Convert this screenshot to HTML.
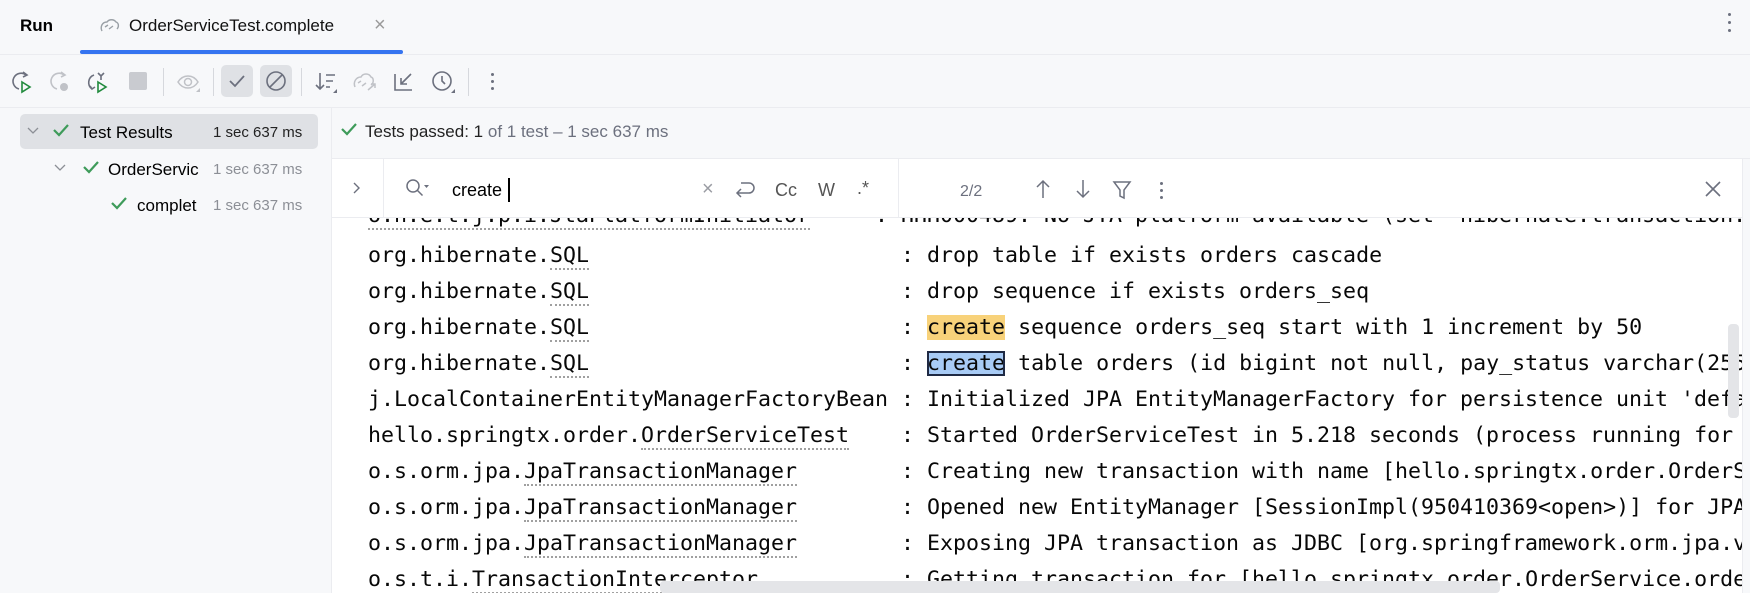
<!DOCTYPE html>
<html><head><meta charset="utf-8"><style>
*{margin:0;padding:0;box-sizing:border-box}
body{width:1750px;height:593px;overflow:hidden;background:#f7f8fa;font-family:"Liberation Sans",sans-serif;color:#000;position:relative}
.a{position:absolute}
.ui{font-size:17px;white-space:nowrap}
.mono{font-family:"DejaVu Sans Mono","Liberation Mono",monospace;font-size:21.6px;letter-spacing:0px;white-space:pre;color:#080808}
.line{position:absolute;left:368px;height:36px;line-height:36px}
.u{border-bottom:2px dotted #a0a0a0}
.sep{position:absolute;top:68px;width:1px;height:28px;background:#d6d8dd}
svg{position:absolute;overflow:visible}
</style></head><body>
<div class="a ui" style="left:20px;top:16px;font-weight:bold;font-size:17px">Run</div>
<svg style="left:99px;top:17px" width="22" height="18" viewBox="0 0 22 18"><path d="M3 14 C1 10 3 5 8 5 C10 2 15 2 17 5 C20 6 20 10 18 12 M6 10 l3 -2 M10 12 l4 -3" stroke="#9aa0a6" stroke-width="1.4" fill="none"/></svg>
<div class="a ui" style="left:129px;top:16px;color:#111">OrderServiceTest.complete</div>
<div class="a ui" style="left:374px;top:14px;color:#9a9a9a;font-size:20px">×</div>
<div class="a" style="left:80px;top:50px;width:323px;height:4px;background:#3574f0;border-radius:2px"></div>
<div class="a" style="left:0;top:54px;width:1750px;height:1px;background:#ebecf0"></div>
<div class="a" style="left:1728px;top:13px;width:3px;height:3px;border-radius:2px;background:#6c707e;box-shadow:0 8px 0 #6c707e,0 16px 0 #6c707e"></div>
<svg style="left:10px;top:70px" width="24" height="24" viewBox="0 0 24 24"><path d="M16 5 A8 8 0 1 0 9 19" stroke="#6c707e" stroke-width="1.6" fill="none"/><path d="M13 2 l4 3 -4 2" stroke="#6c707e" stroke-width="1.6" fill="none"/><path d="M12 12 l8 5 -8 5z" stroke="#208a3c" stroke-width="1.6" fill="none"/></svg>
<svg style="left:48px;top:70px" width="24" height="24" viewBox="0 0 24 24"><path d="M16 5 A8 8 0 1 0 9 19" stroke="#c0c2c7" stroke-width="1.6" fill="none"/><path d="M13 2 l4 3 -4 2" stroke="#c0c2c7" stroke-width="1.6" fill="none"/><circle cx="16" cy="17" r="4" fill="#c0c2c7"/></svg>
<svg style="left:86px;top:70px" width="24" height="24" viewBox="0 0 24 24"><path d="M8 5 A8 8 0 0 0 6 19 M4 16 l2 3 3-2" stroke="#6c707e" stroke-width="1.6" fill="none"/><path d="M12 3 l3 3 3-3 M15 6 V10" stroke="#6c707e" stroke-width="1.6" fill="none"/><path d="M12 12 l8 5 -8 5z" stroke="#208a3c" stroke-width="1.6" fill="none"/></svg>
<div class="a" style="left:129px;top:72px;width:18px;height:18px;background:#c9cbd0;border-radius:2px"></div>
<div class="sep" style="left:163px"></div>
<svg style="left:176px;top:70px" width="26" height="24" viewBox="0 0 26 24"><path d="M2 12 C7 4 17 4 22 12 C17 20 7 20 2 12z" stroke="#c0c2c7" stroke-width="1.5" fill="none"/><circle cx="12" cy="12" r="3.5" stroke="#c0c2c7" stroke-width="1.5" fill="none"/><path d="M24 18 v4 h-4z" fill="#c0c2c7"/></svg>
<div class="sep" style="left:213px"></div>
<div class="a" style="left:221px;top:65px;width:32px;height:32px;background:#dfe1e5;border-radius:5px"></div>
<svg style="left:227px;top:71px" width="20" height="20" viewBox="0 0 20 20"><path d="M3 10 l5 5 9-10" stroke="#6c707e" stroke-width="1.8" fill="none"/></svg>
<div class="a" style="left:260px;top:65px;width:32px;height:32px;background:#dfe1e5;border-radius:5px"></div>
<svg style="left:265px;top:70px" width="22" height="22" viewBox="0 0 22 22"><circle cx="11" cy="11" r="9" stroke="#6c707e" stroke-width="1.6" fill="none"/><path d="M5 17 L17 5" stroke="#6c707e" stroke-width="1.6"/></svg>
<div class="sep" style="left:301px"></div>
<svg style="left:314px;top:70px" width="24" height="24" viewBox="0 0 24 24"><path d="M6 3 v16 M2 15 l4 4 4-4 M12 5 h9 M12 11 h7 M12 17 h4" stroke="#6c707e" stroke-width="1.6" fill="none"/><path d="M23 19 v4 h-4z" fill="#6c707e"/></svg>
<svg style="left:352px;top:70px" width="26" height="24" viewBox="0 0 26 24"><path d="M3 17 C1 12 4 7 9 7 C11 3 17 3 19 7 C22 8 22 13 19 15 M6 13 l3 -2 M10 16 l4-3 M16 20 l7-6 M19 14 h4 v4" stroke="#c0c2c7" stroke-width="1.5" fill="none"/></svg>
<svg style="left:392px;top:70px" width="24" height="24" viewBox="0 0 24 24"><path d="M3 4 v16 h17 M9 14 L19 4 M9 8 v6 h6" stroke="#6c707e" stroke-width="1.6" fill="none"/></svg>
<svg style="left:431px;top:70px" width="24" height="24" viewBox="0 0 24 24"><circle cx="11" cy="11" r="9" stroke="#6c707e" stroke-width="1.6" fill="none"/><path d="M11 6 v5 l3 3" stroke="#6c707e" stroke-width="1.6" fill="none"/><path d="M24 19 v4 h-4z" fill="#6c707e"/></svg>
<div class="sep" style="left:468px"></div>
<div class="a" style="left:491px;top:73px;width:3px;height:3px;border-radius:2px;background:#6c707e;box-shadow:0 7px 0 #6c707e,0 14px 0 #6c707e"></div>
<div class="a" style="left:0;top:107px;width:1750px;height:1px;background:#ebecf0"></div>
<div class="a" style="left:331px;top:108px;width:1px;height:485px;background:#ebecf0"></div>
<div class="a" style="left:20px;top:114px;width:298px;height:35px;background:#dfe1e5;border-radius:5px"></div>
<svg style="left:27px;top:127px" width="12" height="8" viewBox="0 0 12 8"><path d="M1 1 l5 5 5-5" stroke="#8c8f96" stroke-width="1.3" fill="none"/></svg>
<svg style="left:52px;top:123px" width="18" height="14" viewBox="0 0 18 14"><path d="M2 7 l5 5 9-10" stroke="#3e9b5a" stroke-width="2.2" fill="none"/></svg>
<div class="a ui" style="left:80px;top:123px">Test Results</div>
<div class="a ui" style="left:213px;top:124px;font-size:15px;color:#222">1 sec 637 ms</div>
<svg style="left:54px;top:164px" width="12" height="8" viewBox="0 0 12 8"><path d="M1 1 l5 5 5-5" stroke="#8c8f96" stroke-width="1.3" fill="none"/></svg>
<svg style="left:82px;top:160px" width="18" height="14" viewBox="0 0 18 14"><path d="M2 7 l5 5 9-10" stroke="#3e9b5a" stroke-width="2.2" fill="none"/></svg>
<div class="a ui" style="left:108px;top:160px">OrderServic</div>
<div class="a ui" style="left:213px;top:161px;font-size:15px;color:#8c8f96">1 sec 637 ms</div>
<svg style="left:110px;top:196px" width="18" height="14" viewBox="0 0 18 14"><path d="M2 7 l5 5 9-10" stroke="#3e9b5a" stroke-width="2.2" fill="none"/></svg>
<div class="a ui" style="left:137px;top:196px">complet</div>
<div class="a ui" style="left:213px;top:197px;font-size:15px;color:#8c8f96">1 sec 637 ms</div>
<svg style="left:340px;top:122px" width="18" height="14" viewBox="0 0 18 14"><path d="M2 7 l5 5 9-10" stroke="#3e9b5a" stroke-width="2.2" fill="none"/></svg>
<div class="a ui" style="left:365px;top:122px;color:#222">Tests passed: <span>1</span> <span style="color:#6c707e">of 1 test – 1 sec 637 ms</span></div>
<div class="a" style="left:332px;top:158px;width:1418px;height:1px;background:#ebecf0"></div>
<div class="a" style="left:332px;top:159px;width:1410px;height:434px;background:#fff"></div>
<div class="a" style="left:1742px;top:159px;width:8px;height:434px;background:#f7f8fa;border-left:1px solid #ebecf0"></div>
<div class="a" style="left:332px;top:218px;width:1410px;height:375px;overflow:hidden">
<div class="mono" style="position:absolute;left:0;top:2px;width:1410px;height:375px">
<div class="line" style="left:36px;top:-22px"><span class="u">o.h.e.t.j.p.i.JtaPlatformInitiator</span>     : HHH000489: No JTA platform available (set 'hibernate.transaction.jta.platform'</div>
<div class="line" style="left:36px;top:18px">org.hibernate.<span class="u">SQL</span>                        : drop table if exists orders cascade</div>
<div class="line" style="left:36px;top:54px">org.hibernate.<span class="u">SQL</span>                        : drop sequence if exists orders_seq</div>
<div class="line" style="left:36px;top:90px">org.hibernate.<span class="u">SQL</span>                        : <span style="background:#f8d27a">create</span> sequence orders_seq start with 1 increment by 50</div>
<div class="line" style="left:36px;top:126px">org.hibernate.<span class="u">SQL</span>                        : <span style="background:#a8cbf5;outline:2px solid #1f2a44;outline-offset:-2px">create</span> table orders (id bigint not null, pay_status varchar(255),</div>
<div class="line" style="left:36px;top:162px">j.LocalContainerEntityManagerFactoryBean : Initialized JPA EntityManagerFactory for persistence unit 'default'</div>
<div class="line" style="left:36px;top:198px">hello.springtx.order.<span class="u">OrderServiceTest</span>    : Started OrderServiceTest in 5.218 seconds (process running for 6.1)</div>
<div class="line" style="left:36px;top:234px">o.s.orm.jpa.<span class="u">JpaTransactionManager</span>        : Creating new transaction with name [hello.springtx.order.OrderService</div>
<div class="line" style="left:36px;top:270px">o.s.orm.jpa.<span class="u">JpaTransactionManager</span>        : Opened new EntityManager [SessionImpl(950410369&lt;open&gt;)] for JPA</div>
<div class="line" style="left:36px;top:306px">o.s.orm.jpa.<span class="u">JpaTransactionManager</span>        : Exposing JPA transaction as JDBC [org.springframework.orm.jpa.vendor</div>
<div class="line" style="left:36px;top:342px">o.s.t.i.<span class="u">TransactionInterceptor</span>           : Getting transaction for [hello.springtx.order.OrderService.order]</div>
</div></div>
<div class="a" style="left:1728px;top:324px;width:11px;height:94px;background:#e4e5e8;border-radius:4px"></div>
<div class="a" style="left:660px;top:581px;width:840px;height:12px;background:#e4e5e8;border-radius:4px"></div>
<div class="a" style="left:332px;top:159px;width:1410px;height:59px;background:#fff;border-bottom:1px solid #ebecf0"></div>
<div class="a" style="left:383px;top:159px;width:1px;height:59px;background:#ebecf0"></div>
<div class="a" style="left:898px;top:159px;width:1px;height:59px;background:#ebecf0"></div>
<svg style="left:352px;top:181px" width="10" height="14" viewBox="0 0 10 14"><path d="M2 2 l5 5 -5 5" stroke="#6c707e" stroke-width="1.4" fill="none"/></svg>
<svg style="left:405px;top:178px" width="26" height="20" viewBox="0 0 26 20"><circle cx="8" cy="8" r="6" stroke="#6c707e" stroke-width="1.5" fill="none"/><path d="M12.5 12.5 l5 5" stroke="#6c707e" stroke-width="1.5"/><path d="M19 7 h5 l-2.5 3z" fill="#6c707e"/></svg>
<div class="a ui" style="left:452px;top:180px;font-size:18px">create</div>
<div class="a" style="left:508px;top:178px;width:2px;height:24px;background:#000"></div>
<div class="a ui" style="left:702px;top:178px;font-size:20px;color:#9a9ca3">×</div>
<svg style="left:733px;top:179px" width="22" height="22" viewBox="0 0 22 22"><path d="M8 4 h8 a5 5 0 0 1 0 10 h-12 M8 10 l-4 4 4 4" stroke="#6c707e" stroke-width="1.5" fill="none"/></svg>
<div class="a ui" style="left:775px;top:180px;font-size:18px;color:#555">Cc</div>
<div class="a ui" style="left:818px;top:180px;font-size:18px;color:#555">W</div>
<div class="a ui" style="left:857px;top:178px;font-size:18px;color:#555">.*</div>
<div class="a ui" style="left:960px;top:183px;font-size:16px;color:#6c707e">2/2</div>
<svg style="left:1034px;top:178px" width="18" height="22" viewBox="0 0 18 22"><path d="M9 20 V3 M3 9 l6-6 6 6" stroke="#6c707e" stroke-width="1.5" fill="none"/></svg>
<svg style="left:1074px;top:178px" width="18" height="22" viewBox="0 0 18 22"><path d="M9 2 V19 M3 13 l6 6 6-6" stroke="#6c707e" stroke-width="1.5" fill="none"/></svg>
<svg style="left:1112px;top:179px" width="20" height="22" viewBox="0 0 20 22"><path d="M2 3 h16 l-6 8 v8 l-4 -2 v-6z" stroke="#6c707e" stroke-width="1.5" fill="none"/></svg>
<div class="a" style="left:1160px;top:182px;width:3px;height:3px;border-radius:2px;background:#6c707e;box-shadow:0 7px 0 #6c707e,0 14px 0 #6c707e"></div>
<svg style="left:1704px;top:180px" width="18" height="18" viewBox="0 0 18 18"><path d="M2 2 L16 16 M16 2 L2 16" stroke="#6c707e" stroke-width="1.6"/></svg>
</body></html>
